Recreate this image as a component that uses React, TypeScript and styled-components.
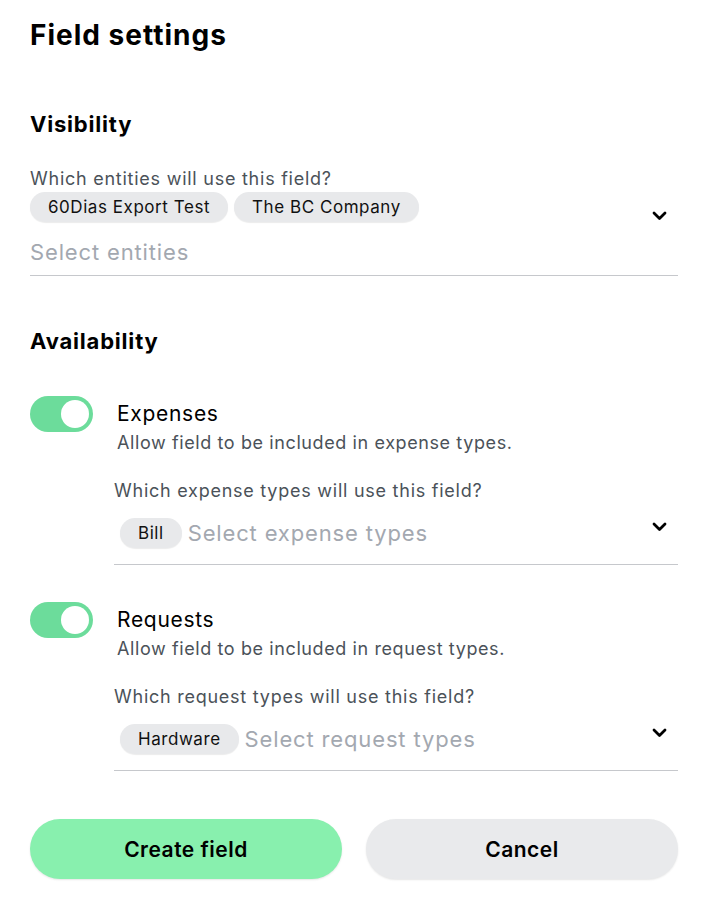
import styled, { createGlobalStyle } from "styled-components";

const GlobalStyle = createGlobalStyle`
    body {
        margin: 0;
        background: #ffffff;
        font-family: Inter, "Noto Sans", sans-serif;
        color: #000000;
    }
`;

const PageSc = styled.div`
    width: 648px;
    padding: 18px 40px 40px 30px;
`;

const TitleSc = styled.h1`
    margin: 0;
    font-size: 28px;
    line-height: 34px;
    font-weight: 700;
    letter-spacing: 1px;
`;

const SectionTitleSc = styled.h2<{ $top: number }>`
    margin: ${props => props.$top}px 0 0;
    font-size: 22px;
    line-height: 26px;
    font-weight: 700;
    letter-spacing: 0.8px;
`;

const LabelSc = styled.div<{ $top: number }>`
    margin-top: ${props => props.$top}px;
    font-size: 18px;
    line-height: 22px;
    letter-spacing: 0.75px;
    color: #4b5259;
`;

const ControlSc = styled.div<{ $gap: number; $pad: number }>`
    display: flex;
    align-items: flex-start;
    margin-top: ${props => props.$gap}px;
    padding-bottom: ${props => props.$pad}px;
    border-bottom: 1px solid #c6c8cc;
`;

const ValuesSc = styled.div<{ $inset?: number; $rowGap?: number }>`
    flex: 1;
    display: flex;
    flex-wrap: wrap;
    align-items: center;
    column-gap: 6px;
    row-gap: ${props => props.$rowGap ?? 0}px;
    padding-left: ${props => props.$inset ?? 0}px;
`;

const ChipSc = styled.span`
    display: inline-flex;
    align-items: center;
    height: 30px;
    padding: 0 18px;
    border-radius: 15px;
    background: #e8e9eb;
    box-shadow: 0 1px 1px rgba(0, 0, 0, 0.08);
    font-size: 17px;
    letter-spacing: 0.55px;
    color: #111111;
`;

const PlaceholderSc = styled.span<{ $block?: boolean }>`
    font-size: 22px;
    line-height: 28px;
    letter-spacing: 0.85px;
    color: #a3a8b0;
    ${props => props.$block ? "flex-basis: 100%;" : ""}
`;

const ChevronSc = styled.svg<{ $top: number }>`
    flex: none;
    width: 15px;
    height: 10px;
    margin: ${props => props.$top}px 11px 0 12px;
`;

const ToggleRowSc = styled.div<{ $top: number }>`
    display: flex;
    gap: 24px;
    margin-top: ${props => props.$top}px;
`;

const ToggleSc = styled.div<{ $on: boolean }>`
    flex: none;
    width: 63px;
    height: 36px;
    box-sizing: border-box;
    padding: 4px;
    border-radius: 18px;
    background: ${props => props.$on ? "#6cdc9b" : "#d0d3d8"};
    display: flex;
    justify-content: ${props => props.$on ? "flex-end" : "flex-start"};
`;

const KnobSc = styled.span`
    width: 28px;
    height: 28px;
    border-radius: 50%;
    background: #ffffff;
`;

const ToggleTextSc = styled.div`
    flex: 1;
    padding-top: 5px;
`;

const ToggleTitleSc = styled.div`
    font-size: 21px;
    line-height: 26px;
    letter-spacing: 0.7px;
    color: #000000;
`;

const ToggleDescSc = styled.div`
    margin-top: 5px;
    font-size: 18px;
    line-height: 22px;
    letter-spacing: 0.6px;
    color: #4b5259;
`;

const NestedSc = styled.div`
    margin-left: -3px;
`;

const ButtonsSc = styled.div`
    display: flex;
    gap: 24px;
    margin-top: 48px;
`;

const ButtonSc = styled.button<{ $primary?: boolean }>`
    flex: 1;
    height: 60px;
    border: none;
    border-radius: 30px;
    background: ${props => props.$primary ? "#88f0ae" : "#e9eaec"};
    box-shadow: 0 1px 2px rgba(0, 0, 0, 0.1);
    font-family: Inter, "Noto Sans", sans-serif;
    font-size: 21px;
    font-weight: 600;
    letter-spacing: 0.5px;
    color: #000000;
    cursor: pointer;
`;

const Chevron = ({ top }: { top: number }) => (
    <ChevronSc $top={top} viewBox="0 0 15 10">
        <polyline points="2,2 7.5,7.5 13,2" fill="none" stroke="#000" strokeWidth="2.8" strokeLinecap="round" strokeLinejoin="round" />
    </ChevronSc>
);

const Toggle = ({ on }: { on: boolean }) => (
    <ToggleSc $on={on}>
        <KnobSc />
    </ToggleSc>
);

type AvailabilityProps = {
    top: number;
    title: string;
    desc: string;
    question: string;
    chip: string;
    placeholder: string;
};

const AvailabilityItem = ({ top, title, desc, question, chip, placeholder }: AvailabilityProps) => (
    <ToggleRowSc $top={top}>
        <Toggle on />
        <ToggleTextSc>
            <ToggleTitleSc>{title}</ToggleTitleSc>
            <ToggleDescSc>{desc}</ToggleDescSc>
            <NestedSc>
                <LabelSc $top={26}>{question}</LabelSc>
                <ControlSc $gap={16} $pad={16}>
                    <ValuesSc $inset={6}>
                        <ChipSc>{chip}</ChipSc>
                        <PlaceholderSc>{placeholder}</PlaceholderSc>
                    </ValuesSc>
                    <Chevron top={4} />
                </ControlSc>
            </NestedSc>
        </ToggleTextSc>
    </ToggleRowSc>
);

const App = () => {
    return (
        <>
            <GlobalStyle />
            <PageSc>
                <TitleSc>Field settings</TitleSc>

                <SectionTitleSc $top={59}>Visibility</SectionTitleSc>
                <LabelSc $top={31}>Which entities will use this field?</LabelSc>
                <ControlSc $gap={2} $pad={9}>
                    <ValuesSc $rowGap={16}>
                        <ChipSc>60Dias Export Test</ChipSc>
                        <ChipSc>The BC Company</ChipSc>
                        <PlaceholderSc $block>Select entities</PlaceholderSc>
                    </ValuesSc>
                    <Chevron top={19} />
                </ControlSc>

                <SectionTitleSc $top={52}>Availability</SectionTitleSc>
                <AvailabilityItem
                    top={42}
                    title="Expenses"
                    desc="Allow field to be included in expense types."
                    question="Which expense types will use this field?"
                    chip="Bill"
                    placeholder="Select expense types"
                />
                <AvailabilityItem
                    top={37}
                    title="Requests"
                    desc="Allow field to be included in request types."
                    question="Which request types will use this field?"
                    chip="Hardware"
                    placeholder="Select request types"
                />

                <ButtonsSc>
                    <ButtonSc $primary>Create field</ButtonSc>
                    <ButtonSc>Cancel</ButtonSc>
                </ButtonsSc>
            </PageSc>
        </>
    );
};

export default App;
